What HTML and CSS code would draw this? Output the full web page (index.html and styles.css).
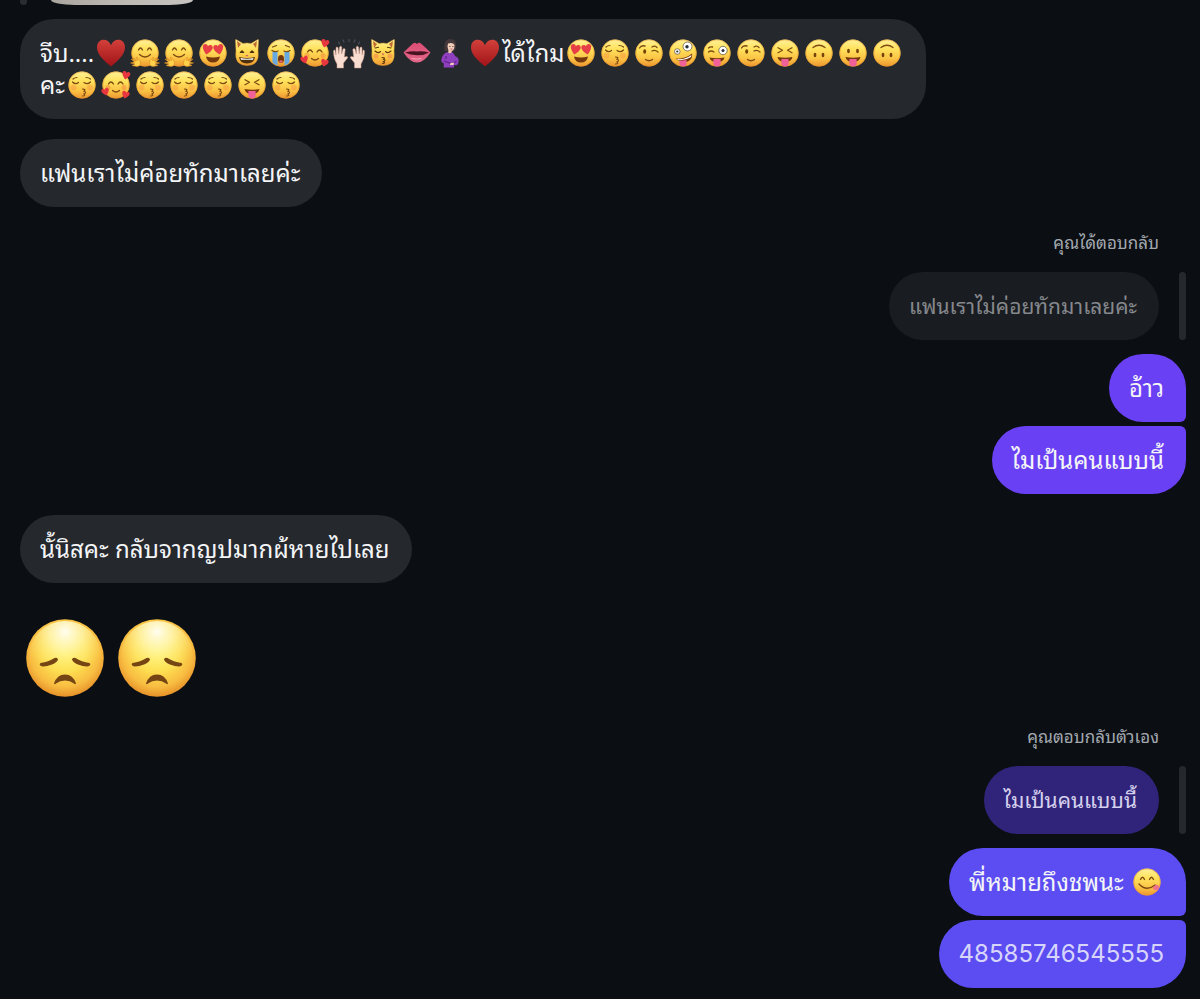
FILE: index.html
```html
<!DOCTYPE html>
<html lang="th">
<head>
<meta charset="utf-8">
<meta name="viewport" content="width=device-width, initial-scale=1">
<title>แชท</title>
<link rel="stylesheet" href="styles.css">
</head>
<body>
<svg class="sprite" aria-hidden="true">
  <defs>
    <linearGradient id="g-face" x1="0" y1="0" x2="0" y2="1"><stop offset="0" stop-color="#fff19a"/><stop offset=".35" stop-color="#ffe25c"/><stop offset=".7" stop-color="#fbc445"/><stop offset="1" stop-color="#ec9530"/></linearGradient>
    <radialGradient id="g-big" cx=".5" cy=".42" r=".6"><stop offset="0" stop-color="#fff060"/><stop offset=".45" stop-color="#fddc4f"/><stop offset=".75" stop-color="#f8bd42"/><stop offset="1" stop-color="#e48a24"/></radialGradient>
    <radialGradient id="g-shine" cx=".5" cy=".15" r=".6"><stop offset="0" stop-color="#fffdf0"/><stop offset=".4" stop-color="#fff8b8" stop-opacity=".75"/><stop offset="1" stop-color="#fff06a" stop-opacity="0"/></radialGradient>
    <linearGradient id="g-heart" x1="0" y1="0" x2="0" y2="1"><stop offset="0" stop-color="#d2403a"/><stop offset="1" stop-color="#a01318"/></linearGradient>
    <linearGradient id="g-lips" x1="0" y1="0" x2="0" y2="1"><stop offset="0" stop-color="#dc4d74"/><stop offset="1" stop-color="#e2688a"/></linearGradient>
    <g id="base"><circle cx="17" cy="16" r="13.600" fill="url(#g-face)"/><circle cx="17" cy="16" r="13.200" fill="none" stroke="#e8932a" stroke-opacity=".6" stroke-width=".9"/></g>
    <path id="heart-shape" d="M0 5C-3 2.500-5-.2-5-2.300C-5-5.500-1.200-6 0-3.200C1.200-6 5-5.500 5-2.300C5-.2 3 2.500 0 5Z"/>
    <path id="tongue" d="M13.400 22H20.600V26.500C20.600 30.400 13.400 30.400 13.400 26.500Z" fill="#f0619a"/>
  </defs>
  <symbol id="e-heart" viewBox="0 0 34 32"><path d="M17 29.500C9 23 3 17 3 10.500C3 1 14 .5 17 8.300C20 .5 31 1 31 10.500C31 17 25 23 17 29.500Z" fill="url(#g-heart)"/></symbol>
  <symbol id="e-hug" viewBox="0 0 34 32"><use href="#base"/><path d="M10.500 13Q12.500 9 14.500 13M19.500 13Q21.500 9 23.500 13M11.500 17.500Q17 22.500 22.500 17.500" fill="none" stroke="#7c4a12" stroke-width="1.300" stroke-linecap="round"/><g fill="#ffd04a" stroke="#d98724" stroke-width=".6"><path d="M3 22L8 24L4.500 20.500L9.500 23.500L8.500 20L12 23.500Q14 29 9 29.500L4 28.500L7 27L2.500 26L6.500 25Z"/><path d="M31 22L26 24L29.500 20.500L24.500 23.500L25.500 20L22 23.500Q20 29 25 29.500L30 28.500L27 27L31.500 26L27.500 25Z"/></g></symbol>
  <symbol id="e-eyes" viewBox="0 0 34 32"><use href="#base"/><use href="#heart-shape" transform="translate(11.300 12.500) rotate(12)" fill="#e63f45"/><use href="#heart-shape" transform="translate(22.700 12.500) rotate(-12)" fill="#e63f45"/><path d="M10 19.500Q17 21.500 24 19.500Q23 25.500 17 25.500T10 19.500Z" fill="#75380c"/></symbol>
  <symbol id="cat" viewBox="0 0 34 32"><path d="M5.500 3.500Q5 2 7 3L13 6.500Q17 5.500 21 6.500L27 3Q29 2 28.500 3.500L28 12.500Q32 29 17 29T6 12.500Z" fill="url(#g-face)" stroke="#d99a36" stroke-width=".5"/><path d="M7 4L11 7L8 11ZM27 4L23 7L26 11Z" fill="#bd6b35"/></symbol>
  <symbol id="e-cat-grin" viewBox="0 0 34 32"><path d="M5.500 3.500Q5 2 7 3L13 6.500Q17 5.500 21 6.500L27 3Q29 2 28.500 3.500L28 14Q30 28.500 17 28.500Q4 28.500 6 14Z" fill="url(#g-face)" stroke="#d99a36" stroke-width=".5"/><path d="M7 4L11 7L8 11ZM27 4L23 7L26 11Z" fill="#bd6b35"/><path d="M9.500 16Q12 10.500 14.500 16ZM19.500 16Q22 10.500 24.500 16Z" fill="#4d310e"/><path d="M9 20Q17 22 25 20Q24 26.500 17 26.500Q10 26.500 9 20Z" fill="#4d310e"/><path d="M10.500 21Q17 22.500 23.500 21L23 22.800H11Z" fill="#fff"/><path d="M15.500 18H18.500L17 19.800Z" fill="#cc5a66"/></symbol>
  <symbol id="e-cat-kiss" viewBox="0 0 34 32"><path d="M5.500 3.500Q5 2 7 3L13 6.500Q17 5.500 21 6.500L27 3Q29 2 28.500 3.500L28 14Q30 28.500 17 28.500Q4 28.500 6 14Z" fill="url(#g-face)" stroke="#d99a36" stroke-width=".5"/><path d="M7 4L11 7L8 11ZM27 4L23 7L26 11Z" fill="#bd6b35"/><path d="M9 14Q12 17 14.500 14.500M19.500 14.500Q22 17 25 14M9 11L12.500 10.300M21.500 10.300L25 11M16 20.500Q20 20.500 17.500 22.300Q20.500 23.300 17.500 24.500Q20 26 16.500 26.500" fill="none" stroke="#5d370c" stroke-width="1.100" stroke-linecap="round"/><path d="M15.500 16.500H18.500L17 18.500Z" fill="#cc5a66"/><circle cx="10" cy="19" r="2.500" fill="#f48a4a" opacity=".6"/><circle cx="24" cy="19" r="2.500" fill="#f48a4a" opacity=".6"/></symbol>
  <symbol id="e-sob" viewBox="0 0 34 32"><use href="#base"/><path d="M8.500 15H13.500V28.500Q10 28 8.500 25ZM20.500 15H25.500V25Q24 28 20.500 28.500Z" fill="#67a9e2"/><path d="M8 13.500Q11 15.500 14 14M20 14Q23 15.500 26 13.500M8.500 10L12.500 8.500M21.500 8.500L25.500 10" fill="none" stroke="#7c4a12" stroke-width="1.300" stroke-linecap="round"/><ellipse cx="17" cy="22" rx="3" ry="4" fill="#75380c"/><path d="M15 24.500Q17 22 19 24.500Q17 27 15 24.500Z" fill="#e6677a"/></symbol>
  <symbol id="e-love" viewBox="0 0 34 32"><use href="#base"/><path d="M9.500 15Q12 11 14.500 15M19 15Q21.500 11 24 15M13.500 21.500Q17 24.500 20.500 21.500" fill="none" stroke="#7c4a12" stroke-width="1.300" stroke-linecap="round"/><circle cx="9" cy="18.500" r="2.500" fill="#f6853e" opacity=".5"/><circle cx="25" cy="18.500" r="2.500" fill="#f6853e" opacity=".5"/><g fill="#e8363e"><use href="#heart-shape" transform="translate(27 6.500) rotate(12) scale(.8)"/><use href="#heart-shape" transform="translate(6.500 23) rotate(-15) scale(.75)"/><use href="#heart-shape" transform="translate(26.500 26) rotate(15) scale(.75)"/></g></symbol>
  <symbol id="e-hands" viewBox="0 0 34 32"><g fill="#f8ddd0" stroke="#c99a88" stroke-width=".5"><path d="M5 31V27Q1.500 22 1.500 14.500Q1.500 12.500 3 13L4 18L4 11Q4.200 9.300 6 10.500L6.800 17L7.500 10Q8.500 8.300 9.800 10L9.600 17L11 12Q12.500 10.800 13.200 12.500L12.300 20Q16.500 18.500 15.500 21L11.500 26V31Z"/><path d="M29 31V27Q32.500 22 32.500 14.500Q32.500 12.500 31 13L30 18L30 11Q29.800 9.300 28 10.500L27.200 17L26.500 10Q25.500 8.300 24.200 10L24.400 17L23 12Q21.500 10.800 20.800 12.500L21.700 20Q17.500 18.500 18.500 21L22.500 26V31Z"/></g><path d="M6.500 5L7.500 7M11 3L12 5M17 2.500V4.500M23 3L22 5M27.500 5L26.500 7" stroke="#474d55" stroke-width="1.300" stroke-linecap="round"/></symbol>
  <symbol id="e-lips" viewBox="0 0 34 32"><path d="M3.500 15.500Q9 10 13 6.500Q15 5 17 7Q19 5 21 6.500Q25 10 30.500 15.500Q24 25.500 17 25.500T3.500 15.500Z" fill="url(#g-lips)"/><path d="M5 15.500Q12 13.500 17 14.500Q22 13.500 29 15.500Q24 18.500 17 18.300T5 15.500Z" fill="#481322"/><path d="M12 21.500Q17 22.500 21 21.500" stroke="#f49ab0" stroke-width="1.200" fill="none" stroke-linecap="round"/></symbol>
  <symbol id="e-pregnant" viewBox="0 0 34 32"><path d="M10.500 14Q9.500 2 16 2T22 9Q22 13 20 14Z" fill="#45383a"/><path d="M14 6.500Q19 5 20.500 8Q20.500 14 17 14Q14 14 13.500 9.500Z" fill="#f2cfbb"/><path d="M14.500 12H17.500L18 18H14Z" fill="#edc4ad"/><path d="M13 15Q16 17.500 18 15Q20.500 17 21 19Q26.500 21 24 27Q22.500 29 20 28V30.500H9.500L10 26.500Q6.500 25.500 7.500 22Q8.500 17 13 15Z" fill="#8e3fbd"/><path d="M10 24L17 26.500L22.500 24.500M12 19V22" stroke="#60208c" stroke-width="1.200" fill="none"/><path d="M16.500 26L20 25.500L19.500 28L16 28Z" fill="#f2cfbb"/><path d="M15.300 9.500H16.500M18.300 9.500H19.500" stroke="#43281f" stroke-width=".8"/><path d="M16.500 12H18.500" stroke="#b84f55" stroke-width=".8"/></symbol>
  <symbol id="e-kiss" viewBox="0 0 34 32"><use href="#base"/><path d="M7.500 13Q10.500 16 13.500 13.500M19 13.500Q22.500 16 25.500 13M8 10Q9.500 8.500 12 8.500M21 8.500Q24 8.500 25.500 10M17.500 20Q21.500 20 19 22.300Q22 23.300 19 25Q21 27 17.500 27" fill="none" stroke="#7c4a12" stroke-width="1.200" stroke-linecap="round"/><circle cx="8.500" cy="18.500" r="3" fill="#f6853e" opacity=".35"/><circle cx="25" cy="18.500" r="3" fill="#f6853e" opacity=".35"/></symbol>
  <symbol id="e-wink" viewBox="0 0 34 32"><use href="#base"/><ellipse cx="12.700" cy="14.500" rx="1.500" ry="2.200" fill="#75420b"/><path d="M7.500 11Q9 8 13 9M20 14Q23 12.500 26 15M20 10Q23 8 25 10.500M13.500 22.500Q17 25 20.500 22.500" fill="none" stroke="#7c4a12" stroke-width="1.300" stroke-linecap="round"/></symbol>
  <symbol id="e-zany" viewBox="0 0 34 32"><use href="#base"/><circle cx="21.500" cy="9.500" r="4.500" fill="#fff" stroke="#5b4a35" stroke-width=".7"/><circle cx="21" cy="9.700" r="1.700" fill="#28303b"/><circle cx="11.300" cy="14.500" r="2.800" fill="#fff" stroke="#5b4a35" stroke-width=".7"/><circle cx="11.300" cy="14.500" r="1.100" fill="#28303b"/><path d="M9.500 21.500Q19 22.500 26 16.500Q27 22 22 24.500T9.500 21.500Z" fill="#75380c"/><path d="M11 22Q19 23 25.500 18L25 20Q19 24 12 23Z" fill="#fff"/><path d="M13.500 24L20.500 23V26.500C20.500 30.500 14 30.500 13.500 26.500Z" fill="#f0619a"/></symbol>
  <symbol id="e-wink-tongue" viewBox="0 0 34 32"><use href="#base"/><circle cx="23" cy="13.500" r="4.200" fill="#fff" stroke="#5b4a35" stroke-width=".7"/><circle cx="23" cy="13.500" r="1.500" fill="#28303b"/><path d="M8.500 15Q11 13 14 15M8.500 11Q10 9.500 12.500 10" fill="none" stroke="#7c4a12" stroke-width="1.300" stroke-linecap="round"/><path d="M9.500 20.500Q17 22 24.500 20.500Q23.500 25 17 25T9.500 20.500Z" fill="#75380c"/><use href="#tongue"/></symbol>
  <symbol id="e-squint" viewBox="0 0 34 32"><use href="#base"/><path d="M10 10.800L14.500 13.300L10 15.800M24 10.800L19.500 13.300L24 15.800" fill="none" stroke="#7c4a12" stroke-width="1.300" stroke-linecap="round" stroke-linejoin="round"/><path d="M9.500 20Q17 21.500 24.500 20Q23.500 25 17 25T9.500 20Z" fill="#75380c"/><use href="#tongue"/></symbol>
  <symbol id="e-tongue" viewBox="0 0 34 32"><use href="#base"/><ellipse cx="12.500" cy="14" rx="1.400" ry="2.200" fill="#75420b"/><ellipse cx="21.500" cy="14" rx="1.400" ry="2.200" fill="#75420b"/><path d="M9.500 20Q17 21.500 24.500 20Q23.500 25 17 25T9.500 20Z" fill="#75380c"/><use href="#tongue"/></symbol>
  <symbol id="e-upside" viewBox="0 0 34 32"><use href="#base"/><ellipse cx="13" cy="18" rx="1.400" ry="2.200" fill="#75420b"/><ellipse cx="21" cy="18" rx="1.400" ry="2.200" fill="#75420b"/><path d="M11 10.500Q17 6 23 10.500" fill="none" stroke="#7c4a12" stroke-width="1.300" stroke-linecap="round"/></symbol>
  <symbol id="e-yum" viewBox="0 0 34 32"><use href="#base"/><path d="M10.500 13.500Q12.500 9 14.500 13.500M19.500 13.500Q21.500 9 23.500 13.500M9 18Q16.500 26 25 19" fill="none" stroke="#7c4a12" stroke-width="1.300" stroke-linecap="round"/><path d="M22.500 22L26 18.500Q30.500 19.500 28.800 22.800Q25.500 26 22.500 22Z" fill="#f0708f"/></symbol>
  <symbol id="e-sad" viewBox="0 0 78 78"><circle cx="39" cy="39" r="38.800" fill="url(#g-big)"/><circle cx="39" cy="38" r="36" fill="url(#g-shine)"/><g fill="#754514"><path d="M14.500 44Q22.500 43 28.500 39Q31.500 38 32 40.500Q31 43.500 26 45.500Q20 47.800 15.500 47.300Q12.500 46 14.500 44Z"/><path d="M63.500 44Q55.500 43 49.500 39Q46.500 38 46 40.500Q47 43.500 52 45.500Q58 47.800 62.500 47.300Q65.500 46 63.500 44Z"/><path d="M28 64.500Q31 55.500 39 55.500T50 64.500Q49.500 66 48 64.500Q44 61.500 39 61.500T30 64.500Q28.500 66 28 64.500Z"/></g></symbol>
</svg>

<main class="chat">
  <div class="cut-row" aria-hidden="true"><span class="avatar-edge"></span><span class="photo-edge"></span></div>

  <p class="bubble first">จีบ....<svg class="emoji"><use href="#e-heart"/></svg><svg class="emoji"><use href="#e-hug"/></svg><svg class="emoji"><use href="#e-hug"/></svg><svg class="emoji"><use href="#e-eyes"/></svg><svg class="emoji"><use href="#e-cat-grin"/></svg><svg class="emoji"><use href="#e-sob"/></svg><svg class="emoji"><use href="#e-love"/></svg><svg class="emoji"><use href="#e-hands"/></svg><svg class="emoji"><use href="#e-cat-kiss"/></svg><svg class="emoji"><use href="#e-lips"/></svg><svg class="emoji"><use href="#e-pregnant"/></svg><svg class="emoji"><use href="#e-heart"/></svg>ได้ไกม<svg class="emoji"><use href="#e-eyes"/></svg><svg class="emoji"><use href="#e-kiss"/></svg><svg class="emoji"><use href="#e-wink"/></svg><svg class="emoji"><use href="#e-zany"/></svg><svg class="emoji"><use href="#e-wink-tongue"/></svg><svg class="emoji"><use href="#e-wink"/></svg><svg class="emoji"><use href="#e-squint"/></svg><svg class="emoji"><use href="#e-upside"/></svg><svg class="emoji"><use href="#e-tongue"/></svg><svg class="emoji"><use href="#e-upside"/></svg><br>คะ<svg class="emoji"><use href="#e-kiss"/></svg><svg class="emoji"><use href="#e-love"/></svg><svg class="emoji"><use href="#e-kiss"/></svg><svg class="emoji"><use href="#e-kiss"/></svg><svg class="emoji"><use href="#e-kiss"/></svg><svg class="emoji"><use href="#e-squint"/></svg><svg class="emoji"><use href="#e-kiss"/></svg></p>

  <p class="bubble">แฟนเราไม่ค่อยทักมาเลยค่ะ</p>

  <section class="sent-group">
    <p class="reply-label">คุณได้ตอบกลับ</p>
    <blockquote class="quote"><p class="bubble quoted">แฟนเราไม่ค่อยทักมาเลยค่ะ</p></blockquote>
    <p class="bubble top violet">อ้าว</p>
    <p class="bubble bottom violet">ไมเป้นคนแบบนี้</p>
  </section>

  <p class="bubble">นั้นิสคะ กลับจากญปมากผ้หายไปเลย</p>

  <div class="big-emojis"><svg class="big-emoji" role="img" aria-label="ผิดหวัง"><use href="#e-sad"/></svg><svg class="big-emoji" role="img" aria-label="ผิดหวัง"><use href="#e-sad"/></svg></div>

  <section class="sent-group">
    <p class="reply-label">คุณตอบกลับตัวเอง</p>
    <blockquote class="quote"><p class="bubble quoted own">ไมเป้นคนแบบนี้</p></blockquote>
    <p class="bubble top indigo">พี่หมายถึงชพนะ <svg class="emoji"><use href="#e-yum"/></svg></p>
    <p class="bubble bottom indigo number">48585746545555</p>
  </section>
</main>
</body>
</html>
```
FILE: styles.css
```css
* { box-sizing: border-box; }
body {
  margin: 0;
  background: #0b0f14;
  color: #f4f5f7;
  font-family: "Noto Sans", "Thonburi", "Noto Sans Thai Looped", "Noto Looped Thai", "Loma", "Garuda", "Liberation Sans", sans-serif;
  font-size: 24px;
  line-height: 32px;
}
p, blockquote { margin: 0; }
.sprite { position: absolute; width: 0; height: 0; }
.chat {
  display: flex;
  flex-direction: column;
  align-items: flex-start;
  gap: 21px;
  padding: 0 14px 10px 20px;
}
.cut-row { display: flex; gap: 24px; height: 5px; margin-bottom: -7px; }
.avatar-edge { width: 7px; background: #292c31; border-radius: 0 0 4px 4px; }
.photo-edge {
  width: 142px;
  background: linear-gradient(90deg, #aaa69f, #b9b5ae 40%, #c7c4c1);
  border-radius: 0 0 24px 24px / 0 0 5px 5px;
}
.bubble {
  padding: 18px 22px 18px 20px;
  border-radius: 34px;
  background: #25282d;
}
.first { margin-bottom: -1px; }
.emoji { width: 34px; height: 32px; vertical-align: top; }
.sent-group {
  align-self: stretch;
  display: flex;
  flex-direction: column;
  align-items: flex-end;
  gap: 4px;
}
.reply-label {
  margin: 2px 27px 12px 0;
  font-size: 17px;
  line-height: 26px;
  color: #a3a8af;
}
.quote {
  display: flex;
  gap: 20px;
  margin-bottom: 10px;
}
.quote::after { content: ""; width: 7px; border-radius: 4px; background: #25282d; }
.quoted { background: #191c21; color: #85888c; font-size: 21px; }
.own { background: #30247a; color: #d5d0ed; }
.top { border-bottom-right-radius: 6px; }
.bottom { border-top-right-radius: 6px; }
.violet { background: #6a40f4; }
.indigo { background: #5b4df1; }
.number { color: #d8d5fb; font-family: Inter, sans-serif; }
.big-emojis { display: flex; gap: 14px; padding: 15px 6px 4px; }
.big-emoji { width: 78px; height: 78px; }
```
